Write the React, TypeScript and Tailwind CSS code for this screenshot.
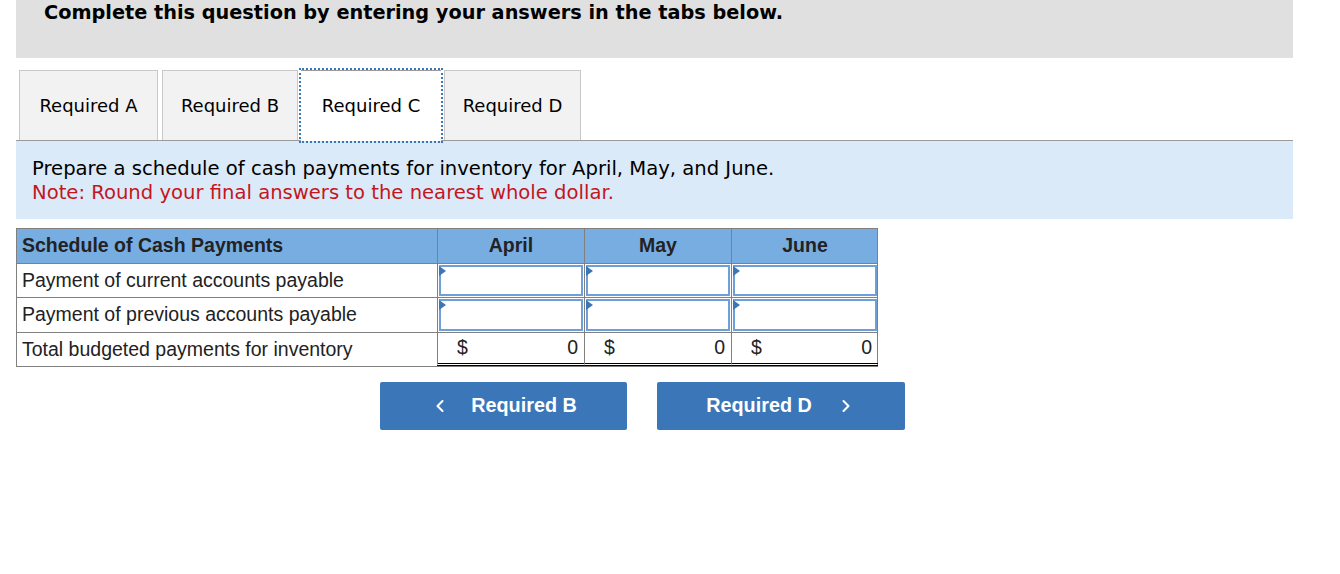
import { ChevronLeft, ChevronRight } from "lucide-react";

const tabs = ["Required A", "Required B", "Required C", "Required D"];
const months = ["April", "May", "June"];
const inputRows = [
  { label: "Payment of current accounts payable", h: "h-[34px]" },
  { label: "Payment of previous accounts payable", h: "h-[35px]" },
];

function InputCell() {
  return (
    <div className="relative h-full border-l border-[#808080] p-px">
      <div className="h-full w-full border-2 border-[#6f9fd8] bg-white" />
      {/* corner marker */}
      <div className="absolute left-px top-[2px] h-0 w-0 border-y-[5px] border-l-[7px] border-y-transparent border-l-[#3a76b8]" />
    </div>
  );
}

export default function App() {
  return (
    <div className="min-h-[574px] bg-white pl-4 text-black">
      <div className="w-[1277px]">
        {/* Header */}
        <div className="h-[58px] bg-[#e0e0e0] pl-[28px] pt-[1px] font-['DejaVu_Sans',sans-serif] text-[19.3px] font-bold leading-6">
          Complete this question by entering your answers in the tabs below.
        </div>

        {/* Tabs */}
        <div className="mt-3 flex items-end border-b border-[#9a9a9a] pl-[3px] font-['DejaVu_Sans',sans-serif] text-[18px]">
          {tabs.map((t, i) => {
            const active = i === 2;
            return (
              <div
                key={t}
                className={
                  active
                    ? "relative z-10 -mb-px mx-[3px] flex h-[71px] w-[140px] items-center justify-center border-t border-[#9a9a9a] bg-white pb-[2px] outline-2 outline-dotted outline-[#3a76b8]"
                    : "flex h-[70px] items-center justify-center border border-b-0 border-[#c8c8c8] bg-[#f2f2f2] " +
                      (i === 0 ? "mr-1 w-[139px]" : i === 1 ? "w-[136px]" : "w-[137px]")
                }
              >
                {t}
              </div>
            );
          })}
        </div>

        {/* Instructions */}
        <div className="bg-[#dbeaf8] px-4 pb-[14px] pt-[16px] font-['DejaVu_Sans',sans-serif] text-[19.6px] leading-6">
          <div>Prepare a schedule of cash payments for inventory for April, May, and June.</div>
          <div className="text-[#c4161c]">Note: Round your final answers to the nearest whole dollar.</div>
        </div>

        {/* Table */}
        <div className="mt-[9px] w-[862px] border border-[#808080] font-['Liberation_Sans',Arial,sans-serif] text-[19.5px] text-[#222]">
          <div className="grid h-[34px] grid-cols-[420px_147px_147px_147px] bg-[#78ade2] font-bold">
            <div className="flex items-center px-[5px]">Schedule of Cash Payments</div>
            {months.map((m) => (
              <div key={m} className="flex items-center justify-center border-l border-[#808080]">
                {m}
              </div>
            ))}
          </div>
          {inputRows.map((r) => (
            <div key={r.label} className={"grid grid-cols-[420px_147px_147px_147px] border-t border-[#808080] " + r.h}>
              <div className="flex items-center px-[5px]">{r.label}</div>
              <InputCell />
              <InputCell />
              <InputCell />
            </div>
          ))}
          <div className="grid h-[34px] grid-cols-[420px_147px_147px_147px] border-t border-[#808080]">
            <div className="flex items-center px-[5px]">Total budgeted payments for inventory</div>
            {months.map((m) => (
              <div
                key={m}
                className="flex items-center justify-between border-b-[3px] border-l border-double border-b-black border-l-[#808080] pl-[19px] pr-[6px]"
              >
                <span>$</span>
                <span>0</span>
              </div>
            ))}
          </div>
        </div>

        {/* Nav buttons */}
        <div className="ml-[364px] mt-[15px] flex gap-[30px] font-['Liberation_Sans',Arial,sans-serif] text-[19.8px] font-bold text-white">
          <button className="flex h-12 w-[247px] items-center justify-center gap-[21px] rounded-[2px] bg-[#3a76b8]">
            <ChevronLeft size={20} strokeWidth={2.5} />
            <span>Required B</span>
          </button>
          <button className="flex h-12 w-[248px] items-center justify-center gap-[24px] rounded-[2px] bg-[#3a76b8]">
            <span>Required D</span>
            <ChevronRight size={20} strokeWidth={2.5} />
          </button>
        </div>
      </div>
    </div>
  );
}
